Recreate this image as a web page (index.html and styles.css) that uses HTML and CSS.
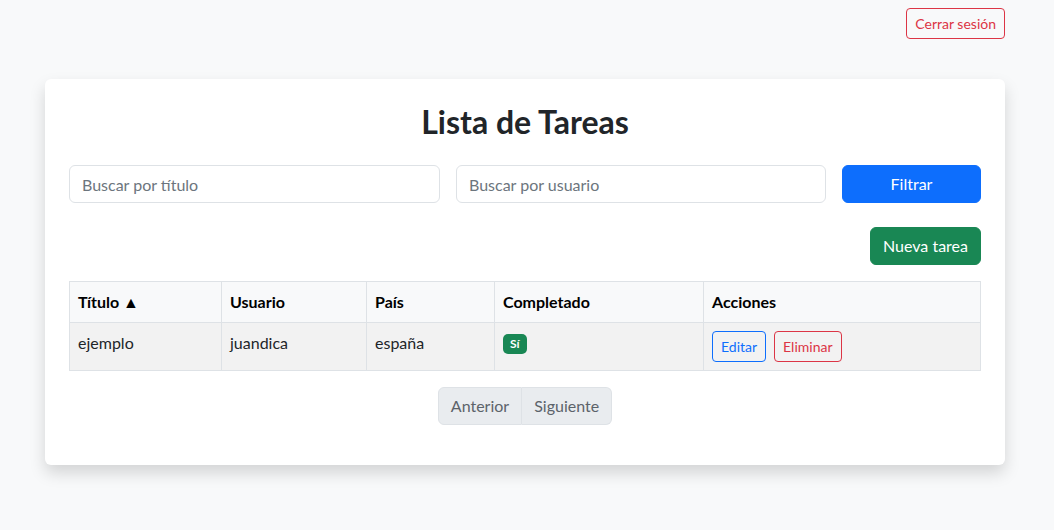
FILE: index.html
```html
<!DOCTYPE html>
<html lang="es">
<head>
<meta charset="utf-8">
<title>Lista de Tareas</title>
<link rel="stylesheet" href="styles.css">
</head>
<body>
  <div class="topbar">
    <button class="btn btn-sm btn-outline-danger">Cerrar sesión</button>
  </div>
  <main class="panel">
    <h2 class="title">Lista de Tareas</h2>
    <div class="filters">
      <input class="field" type="text" placeholder="Buscar por título">
      <input class="field" type="text" placeholder="Buscar por usuario">
      <button class="btn btn-primary">Filtrar</button>
    </div>
    <div class="actions-row">
      <button class="btn btn-success">Nueva tarea</button>
    </div>
    <table class="tasks">
      <colgroup>
        <col class="c-title"><col class="c-user"><col class="c-country"><col class="c-done"><col class="c-actions">
      </colgroup>
      <thead>
        <tr><th>Título ▲</th><th>Usuario</th><th>País</th><th>Completado</th><th>Acciones</th></tr>
      </thead>
      <tbody>
        <tr>
          <td>ejemplo</td>
          <td>juandica</td>
          <td>españa</td>
          <td><span class="badge">Sí</span></td>
          <td><button class="btn btn-sm btn-outline-primary">Editar</button><button class="btn btn-sm btn-outline-danger">Eliminar</button></td>
        </tr>
      </tbody>
    </table>
    <div class="pager">
      <div class="btn-group">
        <button class="btn btn-page">Anterior</button><button class="btn btn-page">Siguiente</button>
      </div>
    </div>
  </main>
</body>
</html>
```
FILE: styles.css
```css
* { box-sizing: border-box; }
body {
  margin: 0;
  padding-right: 4px;
  background: #f8f9fa;
  color: #212529;
  font-family: Lato, "Noto Sans", sans-serif;
  font-size: 16px;
  line-height: 1.5;
}
.topbar {
  width: 960px;
  margin: 0 auto;
  padding-top: 8px;
  display: flex;
  justify-content: flex-end;
}
.btn {
  font-family: inherit;
  font-size: 16px;
  line-height: 24px;
  padding: 6px 12px;
  border: 1px solid transparent;
  border-radius: 6px;
  background: transparent;
  cursor: pointer;
}
.btn-sm {
  font-size: 14px;
  line-height: 21px;
  padding: 4px 8px;
  border-radius: 4px;
}
.btn-outline-danger { color: #dc3545; border-color: #dc3545; }
.btn-outline-primary { color: #0d6efd; border-color: #0d6efd; }
.btn-primary { background: #0d6efd; border-color: #0d6efd; color: #fff; }
.btn-success { background: #198754; border-color: #198754; color: #fff; }
.panel {
  width: 960px;
  margin: 40px auto 48px;
  background: #fff;
  border-radius: 6px;
  padding: 24px;
  box-shadow: 0 8px 16px rgba(0, 0, 0, 0.15);
}
.title {
  margin: 0 0 24px;
  text-align: center;
  font-size: 32px;
  line-height: 38px;
  font-weight: 700;
}
.filters {
  display: grid;
  grid-template-columns: 371fr 370fr 139fr;
  gap: 16px;
}
.field {
  height: 38px;
  font-family: inherit;
  font-size: 16px;
  padding: 6px 12px;
  border: 1px solid #dee2e6;
  border-radius: 6px;
  color: #212529;
  min-width: 0;
}
.field::placeholder { color: #6c757d; }
.actions-row {
  margin-top: 24px;
  display: flex;
  justify-content: flex-end;
}
.tasks {
  width: 100%;
  margin-top: 16px;
  border-collapse: collapse;
  table-layout: fixed;
}
.c-title { width: 152px; }
.c-user { width: 145px; }
.c-country { width: 128px; }
.c-done { width: 209px; }
.tasks th, .tasks td {
  border: 1px solid #dee2e6;
  padding: 8px;
  text-align: left;
  vertical-align: top;
}
.tasks th {
  background: #f8f9fa;
  color: #000;
  font-weight: 700;
}
.tasks td { background: #f2f2f2; }
.badge {
  display: inline-block;
  background: #198754;
  color: #fff;
  font-size: 12px;
  font-weight: 700;
  line-height: 12px;
  padding: 4px 7px;
  border-radius: 5px;
  vertical-align: top;
  margin-top: 3px;
}
.tasks td .btn { margin-right: 8px; }
.pager {
  margin: 16px 0 16px;
  display: flex;
  justify-content: center;
}
.btn-group { display: flex; }
.btn-page {
  background: #e9ecef;
  border-color: #dee2e6;
  color: #5c636a;
}
.btn-group .btn-page:first-child { border-radius: 6px 0 0 6px; }
.btn-group .btn-page:last-child { border-radius: 0 6px 6px 0; border-left-width: 0; }
```
